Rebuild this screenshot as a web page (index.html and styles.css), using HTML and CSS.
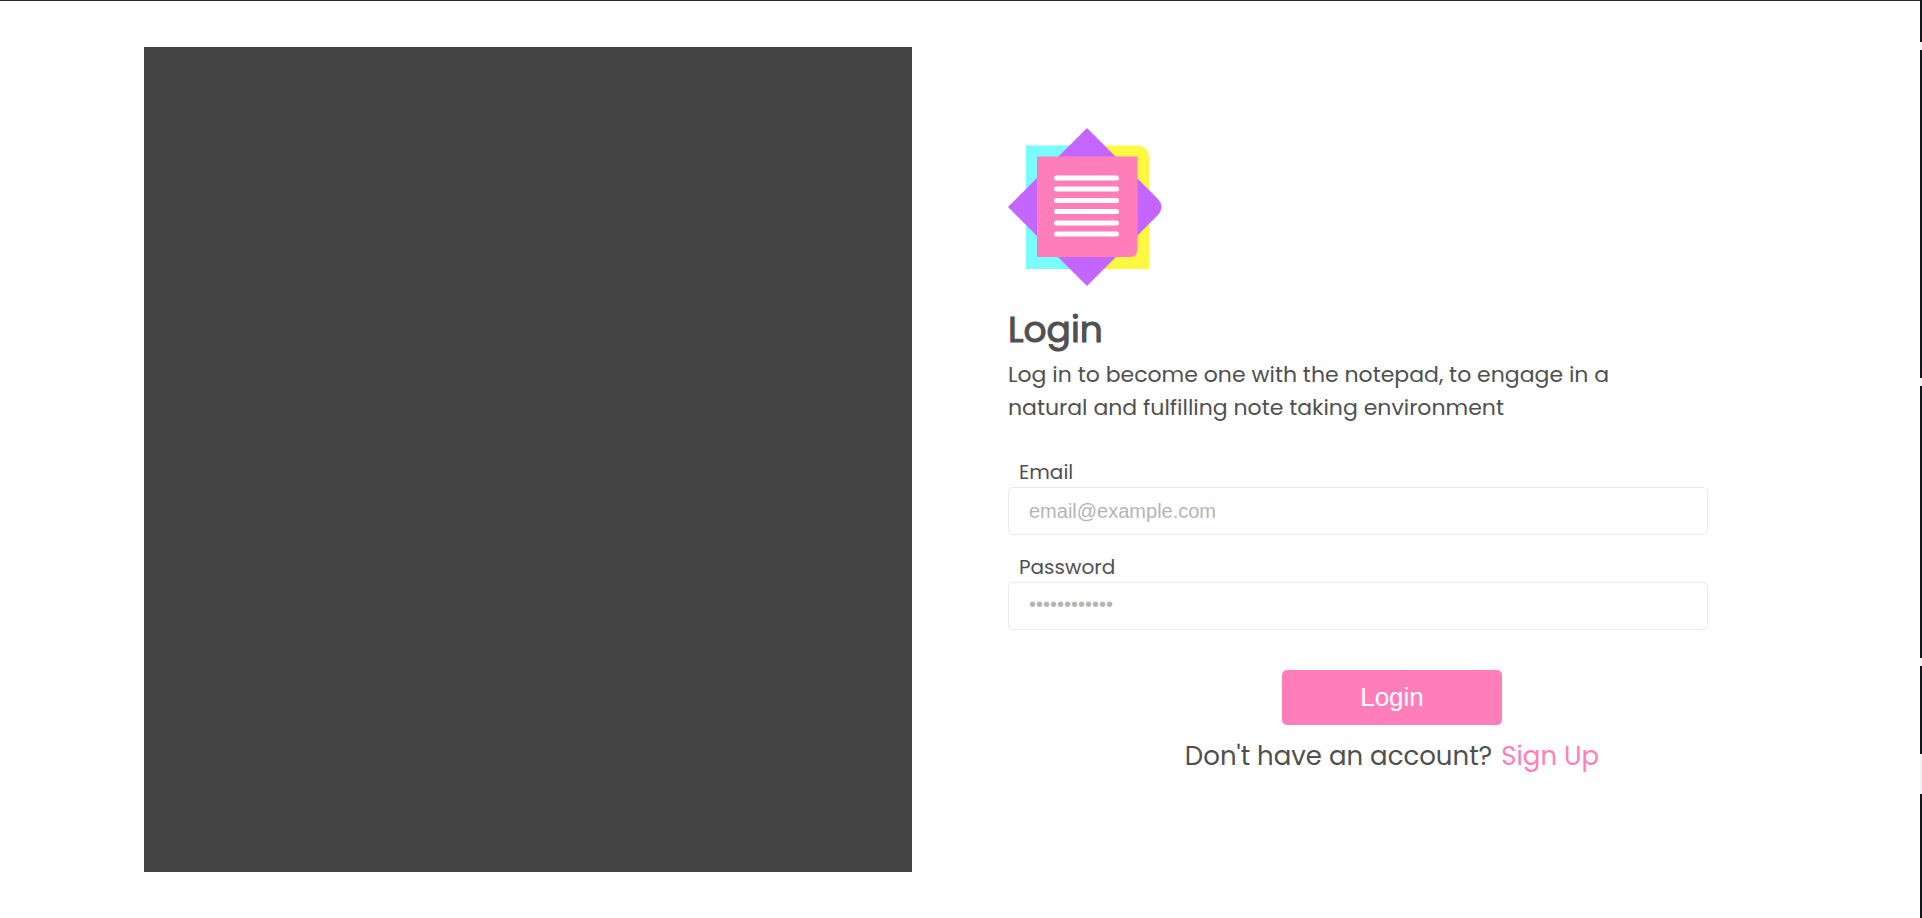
FILE: index.html
```html
<!DOCTYPE html>
<html lang="en">
<head>
<meta charset="utf-8">
<meta name="viewport" content="width=device-width, initial-scale=1">
<title>Login</title>
<link rel="stylesheet" href="styles.css">
</head>
<body>
<main class="page">
  <section class="cover"></section>
  <section class="content">
    <svg class="logo" viewBox="0 0 154 158" width="154" height="158" role="img" aria-label="Notepad">
      <path fill="#7afcff" d="M18 17.5H80V141H18z"/>
      <path fill="#fff740" d="M79 17.5H129Q141 18 141 30V141H79z"/>
      <path fill="#c465ff" d="M0 79L79 0L149 70Q158 79 149 88L79 158z"/>
      <path fill="#ff7eb9" d="M29 28.5H129.5V121Q129.500 129 121.500 129H29z"/>
      <path stroke="#fff" stroke-width="5" stroke-linecap="round" d="M48.500 50H108.500M48.500 61H108.500M48.500 72.500H108.500M48.500 83.500H108.500M48.500 95H108.500M48.500 106H108.500"/>
    </svg>
    <h1 class="title">Login</h1>
    <p class="intro">Log in to become one with the notepad, to engage in a natural and fulfilling note taking environment</p>
    <form class="form">
      <div class="field">
        <label class="label" for="email">Email</label>
        <input class="input" id="email" type="email" placeholder="email@example.com">
      </div>
      <div class="field">
        <label class="label" for="password">Password</label>
        <input class="input dots" id="password" type="password" placeholder="••••••••••••">
      </div>
      <button class="submit" type="submit">Login</button>
    </form>
    <p class="signup">Don't have an account? <a class="link" href="#">Sign Up</a></p>
  </section>
</main>
<div class="edge"></div>
</body>
</html>
```
FILE: styles.css
```css
* {
  box-sizing: border-box;
}

body {
  margin: 0;
  display: flex;
  min-height: 100vh;
  background: #fff;
  color: #505050;
  font-family: Poppins, Inter, sans-serif;
}

.page {
  flex: 1;
  display: grid;
  grid-template-columns: 40% 40%;
  justify-content: center;
  align-items: center;
  column-gap: 5%;
  border-top: 1px solid #26262c;
}

.cover {
  height: calc(90vh - 1px);
  background: #444;
}

.content {
  display: flex;
  flex-direction: column;
  align-items: flex-start;
  padding-bottom: 14px;
}

.logo {
  display: block;
}

.title {
  margin: 16px 0 0;
  font-size: 36px;
  line-height: 56px;
  font-weight: 400;
  -webkit-text-stroke: 1px #505050;
}

.intro {
  margin: 0;
  max-width: 640px;
  font-size: 22px;
  line-height: 33px;
}

.form {
  width: 100%;
  display: flex;
  flex-direction: column;
  align-items: center;
  margin-top: 33px;
}

.field {
  width: 100%;
  display: flex;
  flex-direction: column;
  align-items: flex-start;
  margin-bottom: 17px;
}

.label {
  padding-left: 11px;
  font-size: 20px;
  line-height: 30px;
}

.input {
  width: 91.2%;
  height: 48px;
  padding: 0 20px;
  border: 1px solid #eaeaea;
  border-radius: 5px;
  background: #fff;
  color: #505050;
  font-family: "Liberation Sans", Arial, sans-serif;
  font-size: 20px;
}

.input::placeholder {
  color: #b5b5b5;
  opacity: 1;
}

.dots {
  padding-bottom: 4px;
}

.submit {
  width: 220px;
  height: 55px;
  margin-top: 23px;
  border: 0;
  border-radius: 5px;
  background: #ff7eb9;
  color: #fff;
  font-family: "Liberation Sans", Arial, sans-serif;
  font-size: 26px;
}

.signup {
  align-self: center;
  margin: 10px 0 0;
  font-size: 26px;
  line-height: 42px;
}

.link {
  margin-left: 2px;
  color: #ff7eb9;
  text-decoration: none;
}

.edge {
  width: 2px;
  background: linear-gradient(#14151d 42px, #f2f2f2 42px 50px, #14151d 50px 378px, #f2f2f2 378px 386px, #14151d 386px 658px, #f2f2f2 658px 666px, #14151d 666px 754px, #f2f2f2 754px 794px, #14151d 794px);
}
```
